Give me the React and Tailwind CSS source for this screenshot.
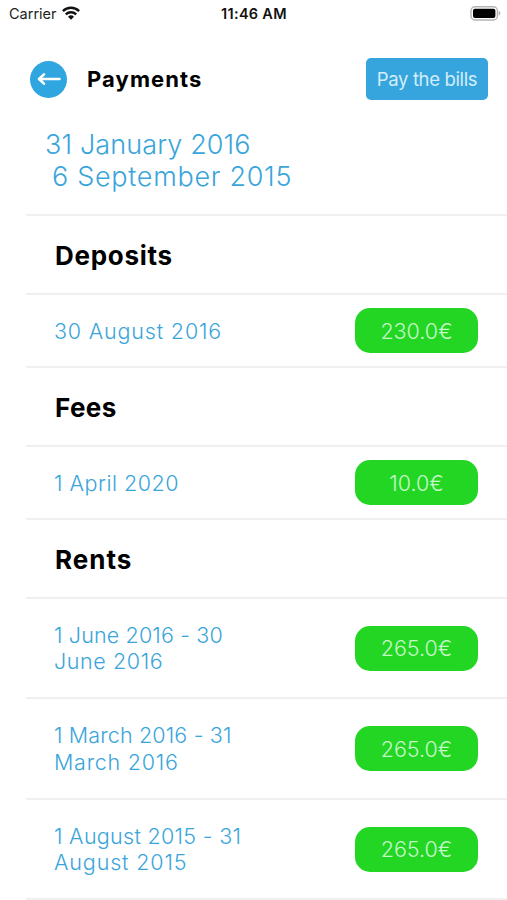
const sections = [
  {
    title: 'Deposits',
    tracking: 'tracking-[0.7px]',
    items: [
      {
        lines: [{ text: '30 August 2016', tracking: 'tracking-[0.82px]' }],
        amount: '230.0€',
      },
    ],
  },
  {
    title: 'Fees',
    tracking: 'tracking-[0.4px]',
    items: [
      {
        lines: [{ text: '1 April 2020', tracking: 'tracking-[0.5px]' }],
        amount: '10.0€',
      },
    ],
  },
  {
    title: 'Rents',
    tracking: 'tracking-[1px]',
    items: [
      {
        lines: [
          { text: '1 June 2016 - 30', tracking: 'tracking-[0.15px]' },
          { text: 'June 2016', tracking: 'tracking-[0.6px]' },
        ],
        amount: '265.0€',
      },
      {
        lines: [
          { text: '1 March 2016 - 31', tracking: 'tracking-[0.15px]' },
          { text: 'March 2016', tracking: 'tracking-[0.75px]' },
        ],
        amount: '265.0€',
      },
      {
        lines: [
          { text: '1 August 2015 - 31', tracking: 'tracking-[0.3px]' },
          { text: 'August 2015', tracking: 'tracking-[0.85px]' },
        ],
        amount: '265.0€',
      },
    ],
  },
];

const WifiIcon = () => (
  <svg viewBox="0 0 18 14" className="w-[18px] h-[14px] -mt-[2px]" fill="none" stroke="#111" strokeWidth="2.4">
    <path d="M0.9 5.1a11.6 11.6 0 0 1 16.2 0" />
    <path d="M3.8 8.4a7.4 7.4 0 0 1 10.4 0" />
    <path d="M9 13.8 6 10.7a4.3 4.3 0 0 1 6 0Z" fill="#111" stroke="none" />
  </svg>
);

const BatteryIcon = () => (
  <svg viewBox="0 0 31 15" className="w-[31px] h-[15px] -mt-[2px]">
    <rect x="1" y="0.8" width="26.4" height="13.2" rx="4" fill="#fff" stroke="#b4b4b4" strokeWidth="1.4" />
    <rect x="3" y="2.7" width="22.4" height="9.4" rx="2" fill="#000" />
    <path d="M28.7 5v4.6c1-.3 1.7-1.2 1.7-2.3s-.7-2-1.7-2.3Z" fill="#b4b4b4" />
  </svg>
);

const StatusBar = () => (
  <div className="grid grid-cols-3 h-7 pl-[9px] pr-[6px] items-center text-[14.5px] text-[#222]">
    <div className="flex items-center gap-[5px]">
      <span>Carrier</span>
      <WifiIcon />
    </div>
    <span className="text-center font-semibold text-[#111] tracking-[0.3px] pr-[2px]">11:46 AM</span>
    <div className="flex justify-end">
      <BatteryIcon />
    </div>
  </div>
);

const Header = () => (
  <header className="flex items-center h-[42px] mt-[30px] pl-[30px] pr-[19px]">
    <button className="w-[37px] h-[37px] rounded-full bg-[#2fa6df] flex items-center justify-center">
      <svg viewBox="0 0 24 16" className="w-6 h-4" fill="none" stroke="#fff" strokeWidth="2.6" strokeLinecap="round" strokeLinejoin="round">
        <path d="M22.5 8H2M7 3.4 2 8l5 4.6" />
      </svg>
    </button>
    <h1 className="ml-[20px] text-[22px] font-bold text-black tracking-[1.1px]">Payments</h1>
    <button className="ml-auto w-[122px] h-[42px] pt-[2px] rounded-[5px] bg-[#37a5dd] text-[#d3edfa] text-[18.5px] tracking-[-0.35px]">
      Pay the bills
    </button>
  </header>
);

const SectionTitle = ({ tracking, children }) => (
  <h2
    className={`h-[78.5px] pt-[3px] pl-[29px] flex items-center border-b-2 border-[#f0f0f0] text-[26px] font-bold text-black ${tracking}`}
  >
    {children}
  </h2>
);

const PaymentRow = ({ lines, amount }) => (
  <div
    className={`flex items-center justify-between pt-px pl-[28px] pr-[29px] border-b-2 border-[#f0f0f0] ${
      lines.length > 1 ? 'h-[100.5px]' : 'h-[73.5px]'
    }`}
  >
    <div className="text-[21.5px] leading-[26.5px] font-[350] text-[#3aa5da]">
      {lines.map(({ text, tracking }) => (
        <p key={text} className={tracking}>
          {text}
        </p>
      ))}
    </div>
    <span className="w-[123px] h-[45px] rounded-[15px] bg-[#24d624] text-[#c5f8c8] text-[21.5px] font-light flex items-center justify-center">
      {amount}
    </span>
  </div>
);

export default function App() {
  return (
    <div className="w-full h-[900px] overflow-hidden bg-white font-['Inter',sans-serif]">
      <StatusBar />
      <Header />
      <main className="ml-[26px]">
        <div className="h-[116px] pt-[28px] pl-[19px] border-b-2 border-[#f0f0f0] text-[27px] leading-[33px] font-[350] text-[#3aa5da]">
          <p className="tracking-[0.1px]">31 January 2016</p>
          <p className="pl-[7px] -mt-px tracking-[0.7px]">6 September 2015</p>
        </div>
        {sections.map(({ title, tracking, items }) => (
          <section key={title}>
            <SectionTitle tracking={tracking}>{title}</SectionTitle>
            {items.map((item) => (
              <PaymentRow key={item.lines[0].text} {...item} />
            ))}
          </section>
        ))}
      </main>
    </div>
  );
}
